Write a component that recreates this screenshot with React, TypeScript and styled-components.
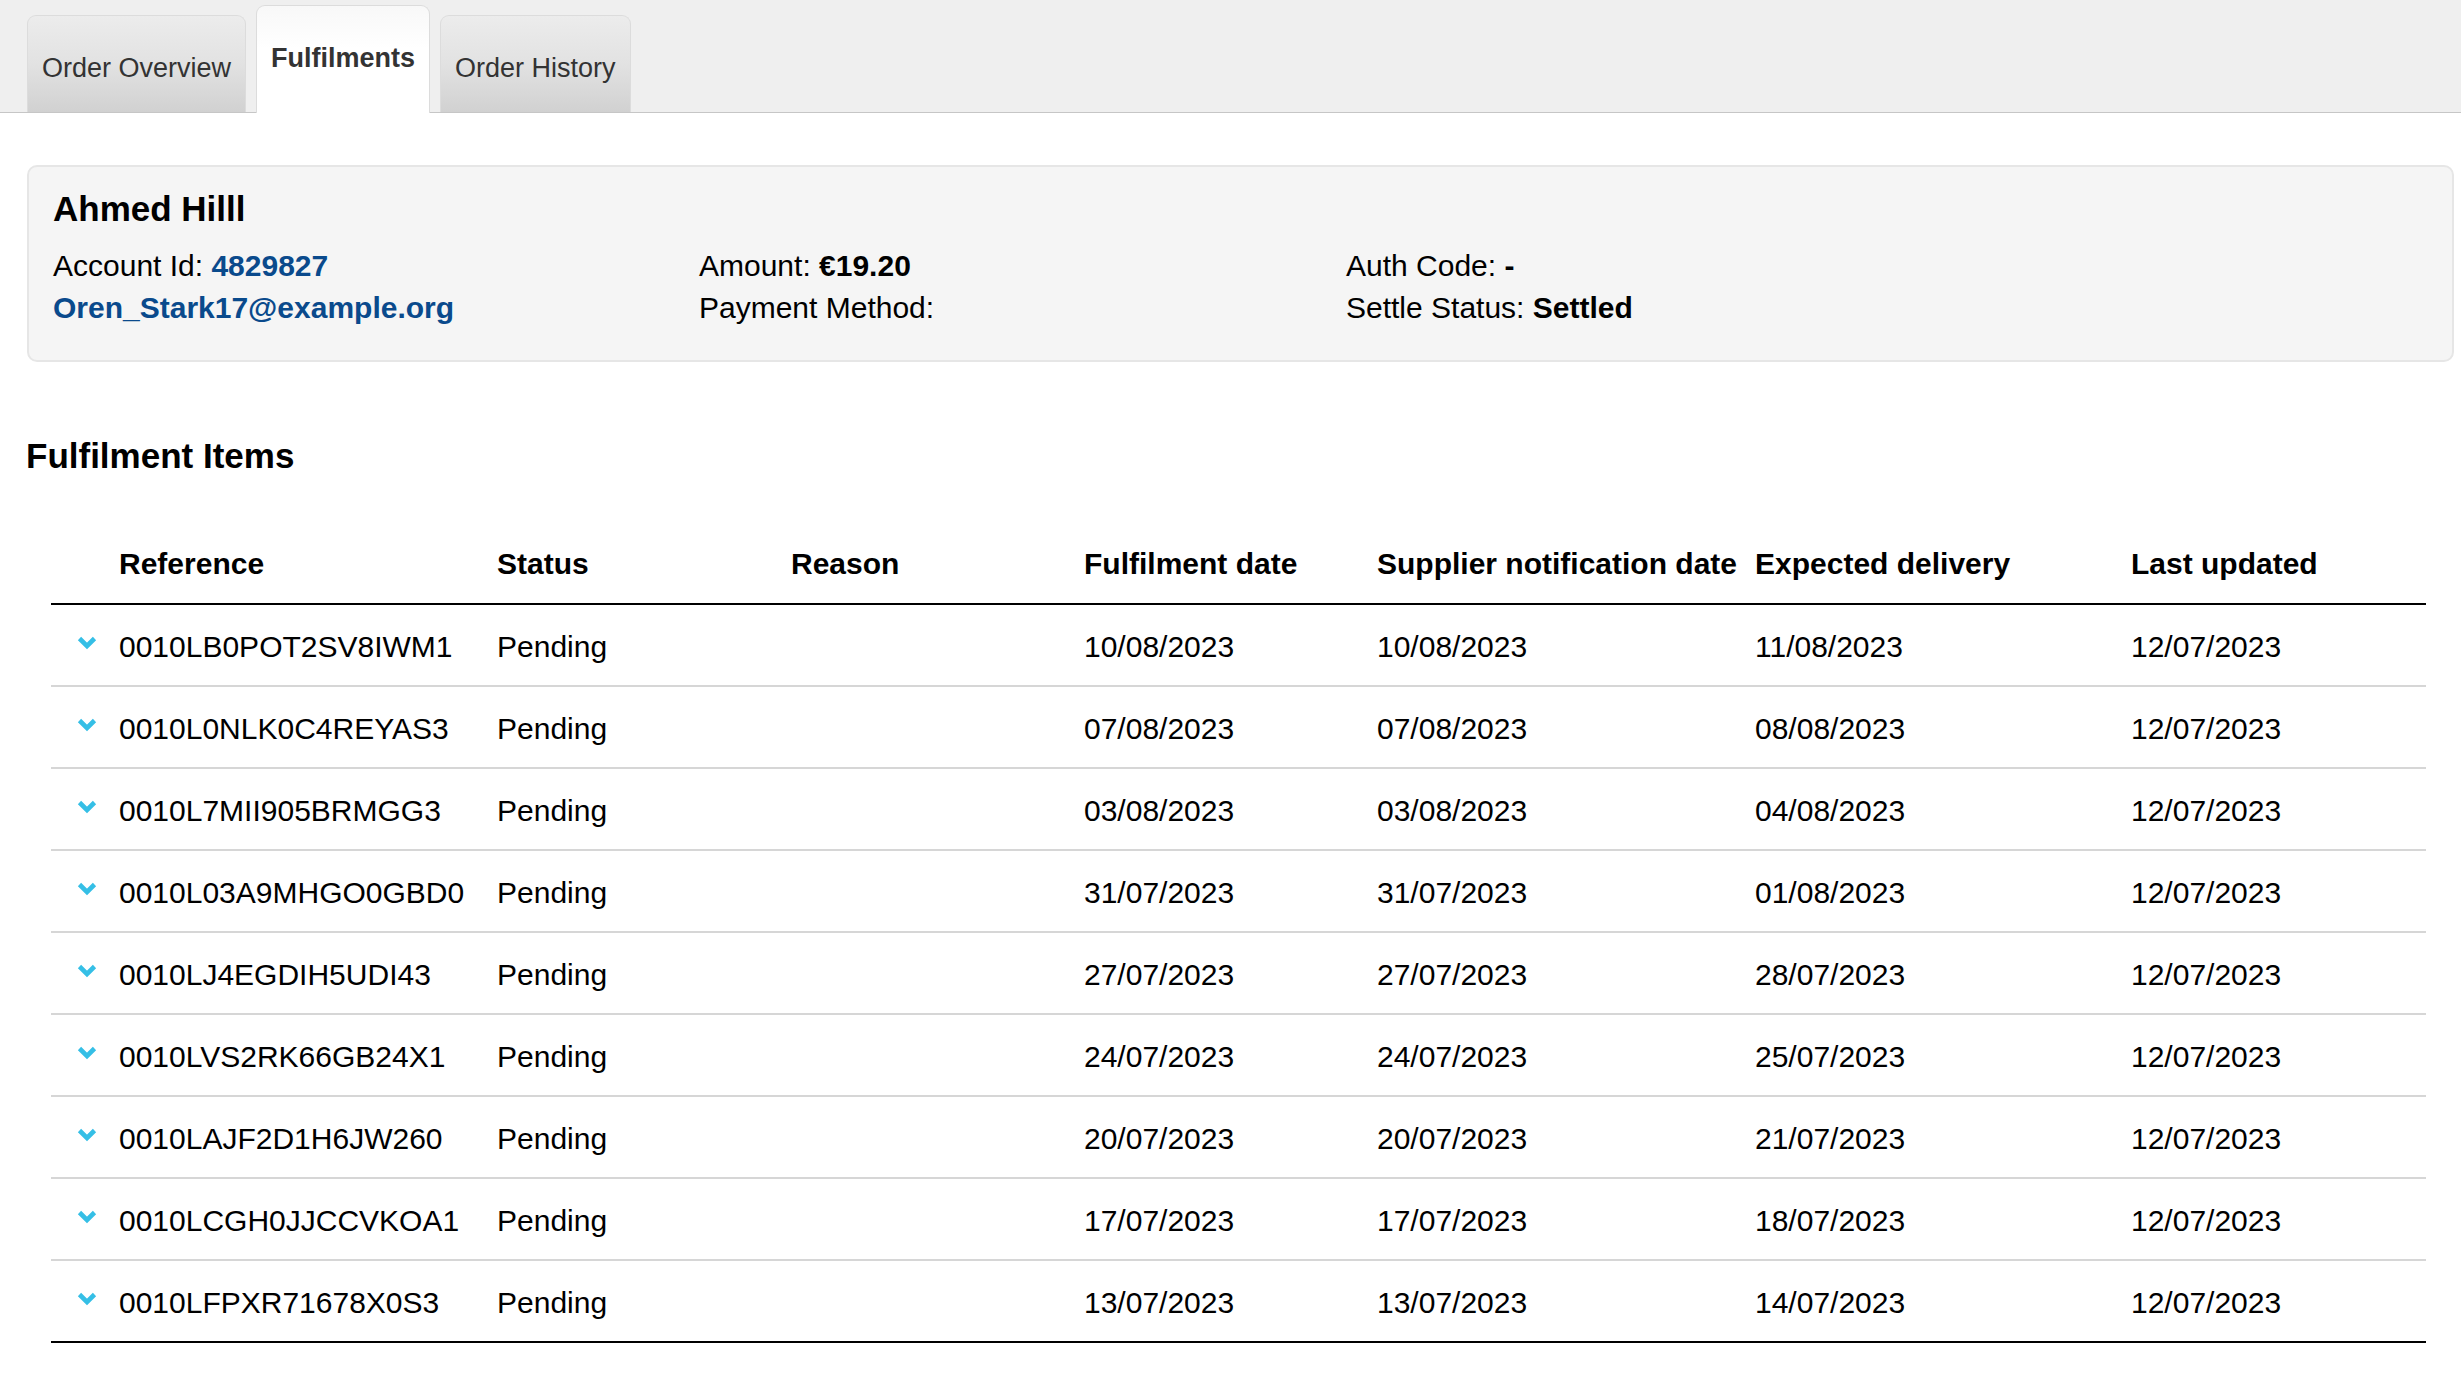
import React from "react";
import styled, { createGlobalStyle } from "styled-components";

const GlobalStyle = createGlobalStyle`
  html, body {
    margin: 0;
    padding: 0;
    background: #ffffff;
  }
  body {
    font-family: "Liberation Sans", Arial, sans-serif;
    color: #000;
  }
`;

const Page = styled.div`
  width: 2461px;
  min-height: 1373px;
  background: #fff;
`;

const TabBar = styled.nav`
  display: flex;
  align-items: flex-end;
  gap: 10px;
  height: 112px;
  padding-left: 27px;
  background: #efefef;
  border-bottom: 1px solid #c6c6c6;
`;

const Tab = styled.div<{ $active?: boolean }>`
  box-sizing: border-box;
  padding: 37px 14px ${(p) => (p.$active ? "40px" : "29px")};
  margin-bottom: ${(p) => (p.$active ? "-1px" : "0")};
  line-height: 30px;
  font-size: 27px;
  font-weight: ${(p) => (p.$active ? 700 : 400)};
  color: #333;
  border: 1px solid #dcdcdc;
  border-bottom: none;
  border-radius: 9px 9px 0 0;
  background: ${(p) =>
    p.$active
      ? "linear-gradient(to bottom, #f8f8f8 0%, #ffffff 40%, #ffffff 100%)"
      : "linear-gradient(to bottom, #ececec 0%, #e2e2e2 50%, #d1d1d1 100%)"};
  white-space: nowrap;
`;

const Content = styled.main`
  margin: 52px 7px 0 27px;
`;

const Card = styled.section`
  box-sizing: border-box;
  height: 197px;
  padding: 22px 24px 30px;
  background: #f5f5f5;
  border: 2px solid #e6e6e6;
  border-radius: 10px;
`;

const Name = styled.h2`
  margin: 0 0 16px;
  font-size: 35px;
  line-height: 40px;
  font-weight: 700;
`;

const InfoGrid = styled.div`
  display: grid;
  grid-template-columns: 646px 647px 1fr;
`;

const InfoCol = styled.div`
  display: flex;
  flex-direction: column;
`;

const InfoLine = styled.div`
  font-size: 30px;
  line-height: 42px;
  white-space: nowrap;
`;

const Link = styled.a`
  color: #0a4a8c;
  font-weight: 700;
  text-decoration: none;
`;

const Strong = styled.strong`
  font-weight: 700;
`;

const SectionTitle = styled.h3`
  margin: 74px 0 49px -1px;
  font-size: 35px;
  line-height: 40px;
  font-weight: 700;
`;

const TableWrap = styled.div`
  padding: 0 28px 0 24px;
`;

const Table = styled.table`
  width: 2375px;
  border-collapse: collapse;
  table-layout: fixed;
  font-size: 30px;
`;

const Th = styled.th`
  text-align: left;
  font-weight: 700;
  line-height: 42px;
  padding: 18px 0 18px;
  border-bottom: 2px solid #000;
  white-space: nowrap;
`;

const Tr = styled.tr`
  &:last-child td {
    border-bottom: 2px solid #000;
  }
`;

const Td = styled.td`
  line-height: 42px;
  padding: 21px 0 17px;
  border-top: 2px solid #d6d6d6;
  white-space: nowrap;
  vertical-align: top;
`;

const ToggleCell = styled(Td)`
  padding-left: 26px;
`;

const Chevron = styled.svg`
  display: block;
  margin-top: 9px;
  width: 20px;
  height: 15px;
`;

const columns = [68, 378, 294, 293, 293, 378, 376, 295];

const headers = [
  "",
  "Reference",
  "Status",
  "Reason",
  "Fulfilment date",
  "Supplier notification date",
  "Expected delivery",
  "Last updated",
];

type Row = {
  ref: string;
  status: string;
  reason: string;
  fulfil: string;
  supplier: string;
  expected: string;
  updated: string;
};

const rows: Row[] = [
  ["0010LB0POT2SV8IWM1", "10/08/2023", "10/08/2023", "11/08/2023"],
  ["0010L0NLK0C4REYAS3", "07/08/2023", "07/08/2023", "08/08/2023"],
  ["0010L7MII905BRMGG3", "03/08/2023", "03/08/2023", "04/08/2023"],
  ["0010L03A9MHGO0GBD0", "31/07/2023", "31/07/2023", "01/08/2023"],
  ["0010LJ4EGDIH5UDI43", "27/07/2023", "27/07/2023", "28/07/2023"],
  ["0010LVS2RK66GB24X1", "24/07/2023", "24/07/2023", "25/07/2023"],
  ["0010LAJF2D1H6JW260", "20/07/2023", "20/07/2023", "21/07/2023"],
  ["0010LCGH0JJCCVKOA1", "17/07/2023", "17/07/2023", "18/07/2023"],
  ["0010LFPXR71678X0S3", "13/07/2023", "13/07/2023", "14/07/2023"],
].map(([ref, fulfil, supplier, expected]) => ({
  ref,
  status: "Pending",
  reason: "",
  fulfil,
  supplier,
  expected,
  updated: "12/07/2023",
}));

const ChevronDown = () => (
  <Chevron viewBox="0 0 20 15" aria-hidden="true">
    <path
      d="M2.5 3.5 L10 11 L17.5 3.5"
      fill="none"
      stroke="#35bfe6"
      strokeWidth="4.6"
      strokeLinejoin="miter"
    />
  </Chevron>
);

export default function App() {
  return (
    <Page>
      <GlobalStyle />
      <TabBar>
        <Tab>Order Overview</Tab>
        <Tab $active>Fulfilments</Tab>
        <Tab>Order History</Tab>
      </TabBar>
      <Content>
        <Card>
          <Name>Ahmed Hilll</Name>
          <InfoGrid>
            <InfoCol>
              <InfoLine>
                Account Id: <Link href="#">4829827</Link>
              </InfoLine>
              <InfoLine>
                <Link href="#">Oren_Stark17@example.org</Link>
              </InfoLine>
            </InfoCol>
            <InfoCol>
              <InfoLine>
                Amount: <Strong>€19.20</Strong>
              </InfoLine>
              <InfoLine>Payment Method:</InfoLine>
            </InfoCol>
            <InfoCol>
              <InfoLine>
                Auth Code: <Strong>-</Strong>
              </InfoLine>
              <InfoLine>
                Settle Status: <Strong>Settled</Strong>
              </InfoLine>
            </InfoCol>
          </InfoGrid>
        </Card>

        <SectionTitle>Fulfilment Items</SectionTitle>

        <TableWrap>
          <Table>
            <colgroup>
              {columns.map((w, i) => (
                <col key={i} style={{ width: w }} />
              ))}
            </colgroup>
            <thead>
              <tr>
                {headers.map((h, i) => (
                  <Th key={i}>{h}</Th>
                ))}
              </tr>
            </thead>
            <tbody>
              {rows.map((r) => (
                <Tr key={r.ref}>
                  <ToggleCell>
                    <ChevronDown />
                  </ToggleCell>
                  <Td>{r.ref}</Td>
                  <Td>{r.status}</Td>
                  <Td>{r.reason}</Td>
                  <Td>{r.fulfil}</Td>
                  <Td>{r.supplier}</Td>
                  <Td>{r.expected}</Td>
                  <Td>{r.updated}</Td>
                </Tr>
              ))}
            </tbody>
          </Table>
        </TableWrap>
      </Content>
    </Page>
  );
}
